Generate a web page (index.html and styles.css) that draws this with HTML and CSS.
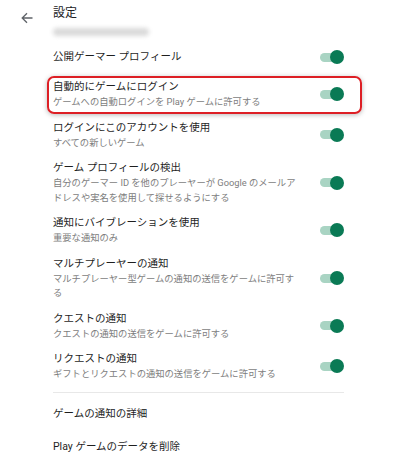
FILE: index.html
```html
<!DOCTYPE html>
<html lang="ja">
<head>
<meta charset="utf-8">
<title>設定</title>
<link rel="stylesheet" href="styles.css">
</head>
<body>
<div class="page">
  <header class="header">
    <svg class="back" viewBox="0 0 12 12" width="12" height="12" aria-hidden="true">
      <path d="M11.5 6H1.2M6 1.2L1.2 6L6 10.8" fill="none" stroke="#5f6368" stroke-width="1.3"/>
    </svg>
    <div class="header-text">
      <div class="title">設定</div>
      <div class="account"></div>
    </div>
  </header>

  <main class="list">
    <div class="row single">
      <div class="row-text"><div class="row-title">公開ゲーマー プロフィール</div></div>
      <div class="toggle"><span class="track"></span><span class="knob"></span></div>
    </div>
    <div class="row highlighted">
      <div class="row-text">
        <div class="row-title">自動的にゲームにログイン</div>
        <div class="row-sub">ゲームへの自動ログインを Play ゲームに許可する</div>
      </div>
      <div class="toggle"><span class="track"></span><span class="knob"></span></div>
    </div>
    <div class="row">
      <div class="row-text">
        <div class="row-title">ログインにこのアカウントを使用</div>
        <div class="row-sub">すべての新しいゲーム</div>
      </div>
      <div class="toggle"><span class="track"></span><span class="knob"></span></div>
    </div>
    <div class="row">
      <div class="row-text">
        <div class="row-title">ゲーム プロフィールの検出</div>
        <div class="row-sub">自分のゲーマー ID を他のプレーヤーが Google のメールアドレスや実名を使用して探せるようにする</div>
      </div>
      <div class="toggle"><span class="track"></span><span class="knob"></span></div>
    </div>
    <div class="row">
      <div class="row-text">
        <div class="row-title">通知にバイブレーションを使用</div>
        <div class="row-sub">重要な通知のみ</div>
      </div>
      <div class="toggle"><span class="track"></span><span class="knob"></span></div>
    </div>
    <div class="row">
      <div class="row-text">
        <div class="row-title">マルチプレーヤーの通知</div>
        <div class="row-sub">マルチプレーヤー型ゲームの通知の送信をゲームに許可する</div>
      </div>
      <div class="toggle"><span class="track"></span><span class="knob"></span></div>
    </div>
    <div class="row">
      <div class="row-text">
        <div class="row-title">クエストの通知</div>
        <div class="row-sub">クエストの通知の送信をゲームに許可する</div>
      </div>
      <div class="toggle"><span class="track"></span><span class="knob"></span></div>
    </div>
    <div class="row">
      <div class="row-text">
        <div class="row-title">リクエストの通知</div>
        <div class="row-sub">ギフトとリクエストの通知の送信をゲームに許可する</div>
      </div>
      <div class="toggle"><span class="track"></span><span class="knob"></span></div>
    </div>

    <div class="divider"></div>

    <div class="link">ゲームの通知の詳細</div>
    <div class="link">Play ゲームのデータを削除</div>
  </main>
</div>
</body>
</html>
```

FILE: styles.css
```css
html, body {
  margin: 0;
  background: #ffffff;
}

body {
  font-family: Roboto, "Noto Sans CJK JP", sans-serif;
  color: #202124;
  overflow: hidden;
}

.header {
  display: flex;
  align-items: flex-start;
  padding: 5px 0 4px 21px;
}

.back {
  flex: none;
  margin-top: 7px;
  margin-right: 20px;
}

.title {
  font-size: 12px;
  line-height: 16px;
  color: #202124;
}

.account {
  margin-top: 7px;
  width: 96px;
  height: 8px;
  border-radius: 4px;
  background: #dadada;
  filter: blur(2px);
}

.list {
  padding: 0 54px 0 53px;
}

.row {
  position: relative;
  display: flex;
  align-items: center;
  gap: 19px;
  padding: 5px 0;
}

.row.single {
  padding: 9px 0;
}

.row-text {
  flex: 1;
  min-width: 0;
}

.row-title {
  font-size: 10.5px;
  line-height: 16px;
  color: #1f1f1f;
}

.row-sub {
  font-size: 9.3px;
  line-height: 14.5px;
  color: #7d7d7d;
}

.toggle {
  flex: none;
  display: flex;
  align-items: center;
  width: 24px;
  height: 14px;
}

.track {
  width: 17px;
  height: 9px;
  border-radius: 4.5px;
  background: #a9d4c3;
}

.knob {
  width: 14px;
  height: 14px;
  margin-left: -7px;
  border-radius: 50%;
  background: #0a7a55;
}

.row.highlighted::after {
  content: "";
  position: absolute;
  top: 2px;
  bottom: 1px;
  left: -6px;
  right: -18px;
  border: 2px solid #dd1f25;
  border-radius: 7px;
  box-shadow: 0 1px 5px rgba(0, 0, 0, 0.28);
  pointer-events: none;
}

.divider {
  height: 1px;
  background: #e8e8e8;
  margin: 5px 0 4px;
}

.link {
  font-size: 10.5px;
  line-height: 17px;
  padding: 8px 0;
  color: #1f1f1f;
}
```
